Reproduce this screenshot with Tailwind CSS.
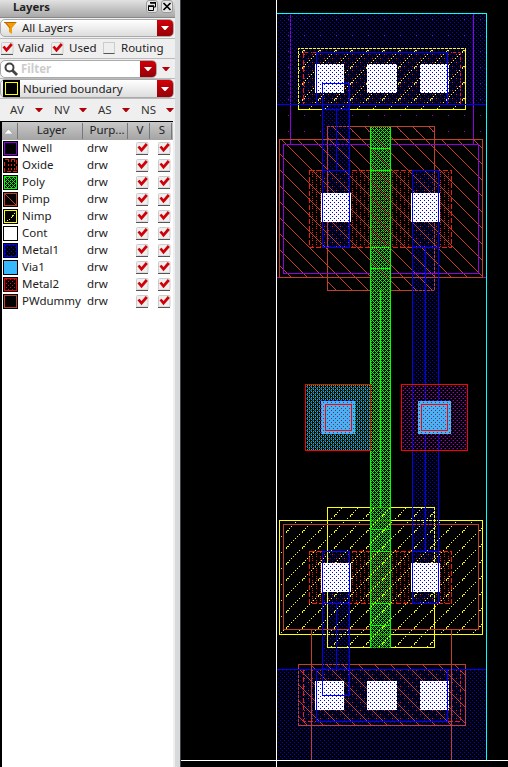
<!DOCTYPE html>
<html lang="en"><head><meta charset="utf-8"><title>Layers</title>
<script src="https://cdn.jsdelivr.net/npm/@tailwindcss/browser@4"></script></head>
<body class="flex h-[767px] w-[508px] overflow-hidden bg-black font-['Noto_Sans',sans-serif] text-[11.5px] leading-none text-[#222]">
<svg class="hidden">
<symbol id="check" viewBox="0 0 13 13"><rect x=".5" y=".5" width="11.5" height="11.5" rx="1" fill="#eee" stroke="#ccc"/><path d="M0 12.5H12" stroke="#555"/><path d="M2.500 4.500 5.500 8.200 10.800 2" fill="none" stroke="#d00008" stroke-width="2.7"/></symbol>
<symbol id="arrow" viewBox="0 0 8 4"><path d="M0 0H8L4.5 4H3.5Z" fill="currentColor"/></symbol>
</svg>
<aside class="flex h-[767px] w-[181px] shrink-0 border-r border-[#444] bg-[#d6dadb]">
<div class="flex w-[175px] flex-col bg-[#efefef]">
 <header class="flex h-[18px] items-center justify-between border-b border-[#888] bg-linear-to-b from-[#e2e2e2] to-[#a8a8a8] pr-0.5 pl-[13px]">
  <b class="mb-[4px] text-[11.3px]">Layers</b>
  <span class="flex gap-[3px] pb-1">
   <svg class="h-[13px] w-[12px]" viewBox="0 0 12 13"><rect x=".5" y=".5" width="11" height="12" rx="2.5" fill="#e5e5e5" stroke="#999"/><path d="M4.500 3H9.500V7H8M2.500 6.500H7.500V10.500H2.500Z" fill="none" stroke="#000"/><path d="M4 2.800H10M2 6H8" stroke="#000" stroke-width="1.500"/></svg>
   <svg class="h-[13px] w-[12px]" viewBox="0 0 12 13"><rect x=".5" y=".5" width="11" height="12" rx="2.5" fill="#e5e5e5" stroke="#999"/><path d="M2.500 3 9.500 10M9.500 3 2.500 10" stroke="#000" stroke-width="1.700"/></svg>
  </span>
 </header>
 <div class="flex h-[21px] items-center border-b border-[#bbb]">
  <div class="flex h-[18px] w-[174px] items-stretch overflow-hidden rounded-[5px] border border-[#aaa] bg-linear-to-b from-white to-[#ddd]">
   <svg class="mt-[2px] ml-[3px] h-[13px] w-[13px]" viewBox="0 0 13 13"><path d="M0 0H13L8 6V12L5 10V6Z" fill="#f39a0b"/><path d="M0 .5H12M2 1L6 6" stroke="#b96700"/></svg>
   <span class="ml-[5px] self-center">All Layers</span>
   <span class="ml-auto flex w-4 items-center justify-center bg-linear-to-b from-[#d00008] to-[#960008] text-white"><svg class="h-1 w-2"><use href="#arrow"/></svg></span>
  </div></div>
 <div class="flex h-[20px] items-center border-b border-[#bbb] pb-px pl-px">
  <svg class="h-[13px] w-[13px]"><use href="#check"/></svg><span class="mb-px ml-1 w-[33px]">Valid</span>
  <svg class="h-[13px] w-[13px]"><use href="#check"/></svg><span class="mb-px ml-[5px] w-[34px]">Used</span>
  <span class="h-3 w-3 rounded-[1px] border border-b-[#555] border-[#ccc] bg-[#eee]"></span><span class="mb-px ml-[6px]">Routing</span>
 </div>
 <div class="flex h-[20px] items-center border-b border-[#bbb]">
  <div class="flex h-[18px] w-[157px] overflow-hidden rounded-[5px] border border-[#aaa] bg-white">
   <svg class="mt-px ml-[3px] h-[15px] w-[15px]" viewBox="0 0 15 15" fill="none"><circle cx="5.500" cy="5.500" r="4" stroke="#444" stroke-width="2"/><path d="M8.500 8.500 13 13" stroke="#444" stroke-width="2.800"/></svg>
   <b class="ml-[2px] self-center text-[#ccc]">Filter</b>
   <span class="ml-auto flex w-4 items-center justify-center bg-linear-to-b from-[#d00008] to-[#960008] text-white"><svg class="h-1 w-2"><use href="#arrow"/></svg></span>
  </div><svg class="ml-[5px] h-1 w-2 text-[#b00008]"><use href="#arrow"/></svg></div>
 <div class="flex h-[20px] items-center border-b border-[#bbb]">
  <div class="flex h-[19px] w-[174px] overflow-hidden rounded-[5px] border border-[#aaa] bg-linear-to-b from-white to-[#ddd]">
   <span class="ml-[2px] h-[17px] w-[17px] border border-black bg-black p-px"><span class="block h-full border border-[#ff0]"></span></span>
   <span class="ml-[3px] self-center">Nburied boundary</span>
   <span class="ml-auto flex w-4 items-center justify-center bg-linear-to-b from-[#d00008] to-[#960008] text-white"><svg class="h-1 w-2"><use href="#arrow"/></svg></span>
  </div></div>
 <div class="flex h-[22px] items-center pb-px pl-[10px] text-[#333]">
  <span class="w-[25px]">AV</span><svg class="h-1 w-2 text-[#b00008]"><use href="#arrow"/></svg>
  <span class="ml-[11px] w-[25px]">NV</span><svg class="h-1 w-2 text-[#b00008]"><use href="#arrow"/></svg>
  <span class="ml-[11px] w-[24px]">AS</span><svg class="h-1 w-2 text-[#b00008]"><use href="#arrow"/></svg>
  <span class="ml-[11px] w-[25px]">NS</span><svg class="h-1 w-2 text-[#b00008]"><use href="#arrow"/></svg>
 </div>
 <div class="flex h-[646px] w-[173px] flex-col border-t border-l-2 border-black bg-white">
  <div class="flex h-[18px] shrink-0 items-center bg-linear-to-b from-[#c9c9c9] to-[#a4a4a4] text-center">
   <svg class="mx-[2px] h-[5px] w-[9px]" viewBox="0 0 9 5"><path d="M0 5 4.500 0 9 5Z" fill="#fff" stroke="#888" stroke-width=".5"/></svg>
   <span class="ml-[2px] flex h-4 w-[66px] items-center justify-center border-x border-[#777] pb-[2px] pl-[3px]">Layer</span>
   <span class="flex h-4 w-[45px] items-center justify-center border-r border-[#777] pb-[2px] pl-1">Purp...</span>
   <span class="flex h-4 w-[22px] shrink-0 items-center justify-center border-r border-[#777] pb-[2px] pl-[3px]">V</span>
   <span class="flex h-4 w-[22px] shrink-0 items-center justify-center border-r border-[#777] pb-[2px] pl-[3px]">S</span>
  </div>
  <div id="rows"></div>
 </div>
</div></aside>
<svg id="layout" class="h-[767px] w-[327px] shrink-0" viewBox="181 0 327 767" shape-rendering="crispEdges">
<defs>
<pattern id="blue" width="4" height="4" patternUnits="userSpaceOnUse"><path d="M0 0h1v1h-1zM2 2h1v1h-1z" fill="#00f"/></pattern>
<pattern id="poly" width="4" height="4" patternUnits="userSpaceOnUse"><path d="M0 0h1v1h-1zM1 1h1v1h-1zM3 1h1v1h-1zM2 2h1v1h-1zM1 3h1v1h-1zM3 3h1v1h-1z" fill="#0f0"/></pattern>
<pattern id="polySparse" width="4" height="4" patternUnits="userSpaceOnUse"><path d="M1 1h1v1h-1zM3 1h1v1h-1zM1 3h1v1h-1zM3 3h1v1h-1z" fill="#0d3"/></pattern>
<pattern id="violet" width="4" height="4" patternUnits="userSpaceOnUse"><path d="M0 0h1v1h-1zM1 0h1v1h-1zM2 2h1v1h-1zM3 2h1v1h-1z" fill="#33f"/></pattern>
<pattern id="reddots" width="4" height="4" patternUnits="userSpaceOnUse"><path d="M1 0h1v1h-1zM3 2h1v1h-1z" fill="#e00020"/></pattern>
<pattern id="well" width="16" height="16" patternUnits="userSpaceOnUse"><path d="M0 3h1v1h-1z" fill="#9000e0"/></pattern>
<pattern id="pimp" width="16" height="16" patternUnits="userSpaceOnUse"><g id="pimpcells" fill="#c04028"></g></pattern>
<pattern id="nimp" width="16" height="16" patternUnits="userSpaceOnUse"><g id="nimpcells" fill="#ff0"></g></pattern>
<pattern id="oxide" width="16" height="16" patternUnits="userSpaceOnUse"><g id="oxidecells" fill="#f02008"></g></pattern>
</defs>
<g id="shapes"></g>
</svg>
<script>
const names=[['Nwell','#9000e0'],['Oxide','#f02008'],['Poly','#00ff00'],['Pimp','#c04028'],['Nimp','#ffff00'],['Cont','#ffffff'],['Metal1','#0000ff'],['Via1','#38b8ff'],['Metal2','#ff0000'],['PWdummy','#c04028']];
const inner={Oxide:'<path d="M5 2V13M8 2V13M11 2V13" stroke="#f02008" stroke-dasharray="2 2"/>',Poly:'<rect x="2" y="2" width="11" height="11" fill="url(#poly)"/>',Pimp:'<path d="M2 2 13 13" stroke="#c04028"/>',Nimp:'<path d="M4 11h1v1h-1zM6 10h1v1h-1zM8 8h1v1h-1zM9 6h2v1h-1v1h-1zM11 4h1v1h-1z" fill="#ff0"/>',Metal1:'<rect x="2" y="2" width="11" height="11" fill="url(#blue)"/>',Metal2:'<rect x="2" y="2" width="11" height="11" fill="url(#reddots)"/>'};
document.getElementById('rows').innerHTML=names.map(([n,c])=>`<div class="flex h-[17px] items-center"><svg class="ml-px h-[15px] w-[15px]" viewBox="0 0 15 15" shape-rendering="crispEdges"><rect width="15" height="15" fill="#000"/><rect x="1.5" y="1.5" width="12" height="12" fill="${n==='Cont'||n==='Via1'?c:'#000'}" stroke="${c}" ${n==='Oxide'?'stroke-dasharray="4 2"':''}/>${inner[n]||''}</svg><span class="mb-[2px] ml-1 w-[65px]">${n}</span><span class="mb-[2px] w-[49px]">drw</span><svg class="h-[13px] w-[13px]"><use href="#check"/></svg><svg class="ml-[9px] h-[13px] w-[13px]"><use href="#check"/></svg></div>`).join('');
const px=(x,y)=>`<rect x="${(x+64)%16}" y="${(y+64)%16}" width="1" height="1"/>`;
let p='',n='',o='';
for(let i=0;i<16;i++)p+=px(i+14,i);
for(let i=1;i<7;i++)n+=px(15+2*i,2-2*i);
n+=px(15,2)+px(16,2)+px(14,3)+px(14,4);
for(let x=0;x<16;x+=4)for(let y=0;y<16;y+=2)if((y+x)%16!==2&&(y+x)%16!==10)o+=px(x,y);
for(const [id,s] of [['pimpcells',p],['nimpcells',n],['oxidecells',o]])document.getElementById(id).innerHTML=s;
let out='';
const fill=(x,y,X,Y,f)=>out+=`<rect x="${x}" y="${y}" width="${X-x}" height="${Y-y}" fill="${f}"/>`;
const box=(x,y,X,Y,c,d='')=>out+=`<rect x="${x+.5}" y="${y+.5}" width="${X-x}" height="${Y-y}" fill="none" stroke="${c}" stroke-dasharray="${d||'none'}"/>`;
const v=(x,y,Y,c)=>fill(x,y,x+1,Y+1,c),h=(y,x,X,c)=>fill(x,y,X+1,y+1,c);
const B='#0000ff',Y='#ffff00',R='#c04028',O='#f02008',P='#9000e0',G='#00ff00',W='#ffffff';
fill(277,14,486,139,'url(#well)');v(290,14,144,P);v(473,14,144,P);h(277,277,486,P);
// P and N implants
fill(327,126,435,140,'url(#pimp)');fill(279,139,483,278,'url(#pimp)');fill(327,278,435,291,'url(#pimp)');
box(327,126,434,290,R);box(279,139,482,277,R);
box(283,144,478,273,P);
fill(327,507,435,521,'url(#nimp)');fill(279,520,483,635,'url(#nimp)');fill(327,635,435,648,'url(#nimp)');
box(327,507,434,647,Y);box(279,520,482,634,Y);box(283,524,478,629,R);
// diffusion
fill(309,170,452,248,'url(#oxide)');fill(309,551,452,604,'url(#oxide)');
box(309,170,451,247,O,'5 2');box(309,551,451,603,O,'5 2');
fill(303,52,461,105,'url(#oxide)');fill(303,669,461,722,'url(#oxide)');
fill(298,48,466,110,'url(#nimp)');fill(298,664,466,726,'url(#pimp)');
box(303,52,460,104,O,'5 2');box(303,669,460,721,O,'5 2');
box(298,48,465,109,Y);box(298,664,465,725,R);
// gate
fill(370,127,391,648,'#000a');fill(370,127,391,648,'url(#poly)');
fill(370,170,391,248,'url(#oxide)');fill(370,139,391,278,'url(#pimp)');fill(370,507,391,648,'url(#nimp)');fill(370,551,391,604,'url(#oxide)');
v(370,127,647,G);v(390,127,647,G);v(380,290,507,G);
for(const y of [148,170,247,268,529,551,603,625])h(y,370,390,G);
// contacts
for(const y of [64,681]){fill(315,y,344,y+29,W);fill(367,y,397,y+29,W);fill(420,y,449,y+29,W)}
for(const y of [193,563]){fill(321,y,351,y+29,W);fill(411,y,440,y+29,W)}
// first metal
fill(277,14,486,105,'url(#blue)');fill(277,669,486,760,'url(#blue)');
h(104,277,485,B);h(669,277,485,B);
box(316,52,447,104,B);box(316,669,447,721,B);
fill(322,105,350,248,'url(#blue)');box(322,83,349,170,B);h(109,322,349,B);v(336,109,170,B);box(322,170,349,247,B);
fill(412,170,439,604,'url(#blue)');box(412,170,438,247,B);box(412,247,438,551,B);v(425,247,551,B);box(412,551,438,603,B);
fill(322,551,350,669,'url(#blue)');box(322,551,349,603,B);box(322,603,349,695,B);v(336,603,669,B);
// via pads
fill(305,384,371,451,'url(#violet)');fill(305,384,371,451,'url(#polySparse)');
fill(401,384,468,451,'url(#blue)');fill(401,384,468,451,'url(#reddots)');
for(const [x,X,a,b] of [[305,370,321,325],[401,467,418,421]]){box(x,384,X,450,'#f00');fill(a,401,a+(a===321?34:33),434,'#38b8ff');fill(a,401,a+33,434,'url(#reddots)');box(b,404,b+26,430,'#f00')}
// cell boundary and axes
v(311,629,759,R);v(451,629,759,R);
h(13,277,486,'#0ff');v(486,13,759,'#0ff');
v(276,0,766,W);h(760,181,507,W);
document.getElementById('shapes').innerHTML=out;
</script></body></html>
